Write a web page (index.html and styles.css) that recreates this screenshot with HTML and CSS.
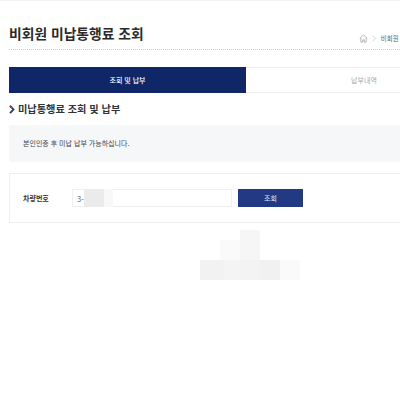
FILE: index.html
```html
<!DOCTYPE html>
<html lang="ko">
<head>
<meta charset="utf-8">
<title>비회원 미납통행료 조회</title>
<link rel="stylesheet" href="styles.css">
</head>
<body>
<div class="page">
  <div class="topline"></div>
  <header class="head">
    <h1 class="title">비회원 미납통행료 조회</h1>
    <nav class="crumbs">
      <svg class="home" viewBox="0 0 10 10" width="9" height="9"><path d="M.8 5 5 1l4.200 4M2 4.200V9h2.200V6.500h1.600V9H8V4.200" fill="none" stroke="#999" stroke-width=".8"/></svg>
      <svg class="sep" viewBox="0 0 5 8" width="4" height="7"><path d="M1 .5 4 4 1 7.500" fill="none" stroke="#bbb" stroke-width=".8"/></svg>
      <span class="crumb">비회원 미납통행료 조회</span>
    </nav>
  </header>
  <div class="tabs">
    <div class="tab active">조회 및 납부</div>
    <div class="tab">납부내역</div>
  </div>
  <h2 class="section">
    <svg class="chev" viewBox="0 0 6 9" width="6" height="9"><path d="M1 .8 4.500 4.500 1 8.200" fill="none" stroke="#1a3f6b" stroke-width="1.800"/><path d="M1 .8 3 3" fill="none" stroke="#b5332e" stroke-width="1.800"/></svg>
    미납통행료 조회 및 납부
  </h2>
  <div class="notice">본인인증 후 미납 납부 가능하십니다.</div>
  <div class="card">
    <span class="label">차량번호</span>
    <div class="input">3-<span class="blur"></span></div>
    <div class="btn">조회</div>
  </div>
  <div class="mosaic">
    <i class="m a"></i><i class="m b"></i><i class="m c"></i><i class="m d"></i><i class="m e"></i><i class="m f"></i><i class="m g"></i>
  </div>
</div>
</body>
</html>
```
FILE: styles.css
```css
html, body { margin: 0; padding: 0; background: #fff; }
.page { width: 400px; height: 400px; overflow: hidden; position: relative; font-family: "Noto Sans CJK KR", "Noto Sans", sans-serif; color: #222; }
.topline { height: 1px; background: #f3f3f3; }
.head { height: 48px; margin-left: 9px; display: flex; align-items: flex-end; border-bottom: 1px dotted #c8c8c8; white-space: nowrap; }
.title { margin: 0 0 5px; font-size: 13.800px; line-height: 22px; font-weight: 700; color: #2a2a2a; flex: 0 0 auto; }
.crumbs { margin: 0 0 6px 215px; display: flex; align-items: center; gap: 4px; flex: 0 0 auto; }
.crumb { font-size: 6.500px; line-height: 10px; color: #666; margin-left: 1px; }
.home, .sep { display: block; }
.tabs { display: flex; margin: 17px 0 0 9px; width: 474px; height: 26px; }
.tab { box-sizing: border-box; display: flex; align-items: center; justify-content: center; font-size: 7px; color: #aaa; border: 1px solid #eee; border-left: 0; flex: 1; }
.tab.active { flex: 0 0 237px; background: #0f2767; border: 0; color: #fff; font-weight: 500; }
.section { margin: 8px 0 0 9px; height: 16px; display: flex; align-items: center; gap: 3px; font-size: 10.200px; line-height: 16px; font-weight: 700; color: #333; }
.notice { margin: 8px 0 0 9px; padding: 0 0 2px 14px; height: 37px; box-sizing: border-box; background: #f6f7f9; display: flex; align-items: center; font-size: 7px; color: #444; border-radius: 2px; }
.card { margin: 11px 0 0 9px; height: 50px; box-sizing: border-box; border: 1px solid #eee; border-right: 0; display: flex; align-items: center; padding-left: 13px; }
.label { width: 49px; font-size: 7px; font-weight: 700; color: #333; }
.input { position: relative; width: 160px; height: 18px; box-sizing: border-box; border: 1px solid #f0f0f0; padding-left: 4px; display: flex; align-items: center; font-size: 7.500px; color: #666; }
.blur { position: absolute; left: 11px; top: -1px; width: 29px; height: 18px; background: linear-gradient(90deg, #ebebeb 0 70%, #f8f8f8 70%); }
.btn { margin-left: 6px; width: 65px; height: 18px; background: #223a84; color: #dfe5f5; font-size: 7px; display: flex; align-items: center; justify-content: center; }
.mosaic { position: absolute; left: 200px; top: 230px; width: 100px; height: 50px; }
.m { position: absolute; display: block; }
.a { left: 20px; top: 10px; width: 20px; height: 20px; background: #fafafa; }
.b { left: 40px; top: 0; width: 20px; height: 30px; background: #f6f6f6; }
.c { left: 0; top: 30px; width: 24px; height: 20px; background: #f2f2f2; }
.d { left: 24px; top: 30px; width: 16px; height: 20px; background: #f4f4f4; }
.e { left: 40px; top: 30px; width: 20px; height: 20px; background: #f3f3f3; }
.f { left: 60px; top: 30px; width: 20px; height: 20px; background: #f1f1f1; }
.g { left: 80px; top: 30px; width: 20px; height: 20px; background: #fafafa; }
```
